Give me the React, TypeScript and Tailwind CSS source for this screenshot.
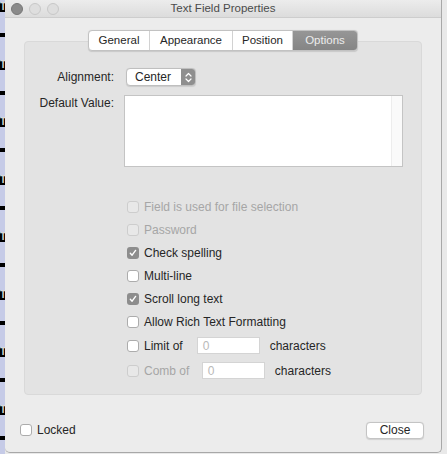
import React from 'react';

type BoxState = 'off' | 'on' | 'disabled';

function CheckBox({ state }: { state: BoxState }) {
  if (state === 'on') {
    return (
      <span className="flex h-[12px] w-[12px] shrink-0 items-center justify-center rounded-[3px] bg-[#8d8d8d]">
        <svg width="8" height="8" viewBox="0 0 8 8" fill="none">
          <path d="M1.3 4.3 L3.1 6.2 L6.6 1.4" stroke="#ffffff" strokeWidth="1.4" strokeLinecap="round" strokeLinejoin="round" />
        </svg>
      </span>
    );
  }
  if (state === 'disabled') {
    return <span className="h-[12px] w-[12px] shrink-0 rounded-[3px] border border-[#cdcdcd] bg-[#e8e8e8]" />;
  }
  return <span className="h-[12px] w-[12px] shrink-0 rounded-[3px] border border-[#acacac] bg-white" />;
}

function Row({ state, label, h = 'h-[23px]', children }: { state: BoxState; label: string; h?: string; children?: React.ReactNode }) {
  return (
    <div className={`flex items-center ${h}`}>
      <CheckBox state={state} />
      <span className={`ml-[5px] whitespace-nowrap ${state === 'disabled' ? 'text-[#a6a6a6]' : ''}`}>{label}</span>
      {children}
    </div>
  );
}

function LeftStrip() {
  const periods = Array.from({ length: 8 });
  return (
    <div className="flex w-[5px] shrink-0 flex-col overflow-hidden bg-[#c6cbe7]">
      {periods.map((_, i) => (
        <div key={i} className="flex h-[57.5px] shrink-0 flex-col">
          <div className="mt-[2px] h-[10px] overflow-hidden bg-black text-[10px] font-bold leading-[10px] text-[#d8d8d8]">T</div>
          <div className="mt-[21px] h-[4px] bg-black" />
        </div>
      ))}
    </div>
  );
}

const tabs = [
  { label: 'General', w: 'w-[61px]' },
  { label: 'Appearance', w: 'w-[83px]' },
  { label: 'Position', w: 'w-[60px]' },
];

export default function App() {
  return (
    <div className="flex h-[454px] w-[447px] overflow-hidden bg-[#e9e9e9] font-['Liberation_Sans',Arial,sans-serif] text-[12px] text-[#262626]">
      <LeftStrip />

      <div className="flex h-[453px] w-[437px] shrink-0 flex-col overflow-hidden rounded-b-[5px] border-r border-b border-[#a8a8a8] bg-[#ececec]">
        {/* Title bar */}
        <div className="grid h-[18px] shrink-0 grid-cols-[1fr_auto_1fr] items-center border-b border-[#cdcdcd] bg-gradient-to-b from-[#ececec] to-[#dcdcdc]">
          <div className="flex items-center gap-[6px] pl-[6px]">
            <span className="h-[12px] w-[12px] rounded-full border border-[#777777] bg-[#8a8a8a]" />
            <span className="h-[12px] w-[12px] rounded-full border border-[#c8c8c8] bg-[#dedede]" />
            <span className="h-[12px] w-[12px] rounded-full border border-[#c8c8c8] bg-[#dedede]" />
          </div>
          <div className="text-[11.5px] leading-[17px] text-[#4b4b4b]">Text Field Properties</div>
          <div />
        </div>

        {/* Body */}
        <div className="flex flex-1 flex-col px-[19px] pt-[12px]">
          <div className="relative z-10 flex h-[21px] self-center overflow-hidden rounded-[4px] border border-[#c2c2c2] bg-white text-[11.5px] shadow-[0_0.5px_1px_rgba(0,0,0,0.12)]">
            {tabs.map((t) => (
              <div key={t.label} className={`flex items-center justify-center border-r border-[#d2d2d2] ${t.w}`}>
                {t.label}
              </div>
            ))}
            <div className="flex w-[64px] items-center justify-center bg-gradient-to-b from-[#969696] to-[#858585] text-[#ececec]">Options</div>
          </div>

          <div className="-mt-[10px] flex h-[354px] flex-col rounded-[4px] border border-[#d9d9d9] bg-[#e3e3e3] pt-[26px]">
            {/* Alignment */}
            <div className="flex h-[18px] items-center">
              <span className="w-[89px] text-right">Alignment:</span>
              <div className="ml-[12px] flex h-[18px] w-[70px] items-stretch overflow-hidden rounded-[4px] border border-[#bfbfbf] bg-white shadow-[0_0.5px_1px_rgba(0,0,0,0.1)]">
                <span className="flex flex-1 items-center pl-[8px]">Center</span>
                <span className="flex w-[14px] items-center justify-center bg-[#8f8f8f]">
                  <svg width="7" height="11" viewBox="0 0 7 11" fill="none">
                    <path d="M1 4 L3.5 1.5 L6 4 M1 7 L3.5 9.5 L6 7" stroke="#ffffff" strokeWidth="1.2" strokeLinecap="round" strokeLinejoin="round" />
                  </svg>
                </span>
              </div>
            </div>

            {/* Default value */}
            <div className="mt-[9px] flex items-start">
              <span className="w-[89px] pt-[1px] text-right leading-[14px]">Default Value:</span>
              <div className="ml-[10px] flex h-[72px] w-[279px] border border-[#c4c4c4] bg-white">
                <div className="flex-1" />
                <div className="w-[11px] border-l border-[#ededed] bg-[#fafafa]" />
              </div>
            </div>

            {/* Options list */}
            <div className="mt-[28px] flex flex-col pl-[102px]">
              <Row state="disabled" label="Field is used for file selection" />
              <Row state="disabled" label="Password" />
              <Row state="on" label="Check spelling" />
              <Row state="off" label="Multi-line" />
              <Row state="on" label="Scroll long text" />
              <Row state="off" label="Allow Rich Text Formatting" />
              <Row state="off" label="Limit of" h="h-[25px]">
                <div className="ml-[14px] flex h-[17px] w-[63px] items-center border border-[#d4d4d4] bg-white pl-[5px] text-[#b9b9b9]">0</div>
                <span className="ml-[10px]">characters</span>
              </Row>
              <Row state="disabled" label="Comb of" h="h-[25px]">
                <div className="ml-[12.5px] flex h-[17px] w-[63px] items-center border border-[#d4d4d4] bg-white pl-[5px] text-[#b9b9b9]">0</div>
                <span className="ml-[10px]">characters</span>
              </Row>
            </div>
          </div>

          {/* Bottom bar */}
          <div className="-ml-[4px] -mr-[2px] mt-[26px] flex items-center justify-between">
            <div className="flex items-center">
              <CheckBox state="off" />
              <span className="ml-[5px]">Locked</span>
            </div>
            <div className="flex h-[17px] w-[58px] items-center justify-center rounded-[4px] border border-[#c4c4c4] bg-white shadow-[0_0.5px_1px_rgba(0,0,0,0.12)]">
              Close
            </div>
          </div>
        </div>
      </div>
    </div>
  );
}
